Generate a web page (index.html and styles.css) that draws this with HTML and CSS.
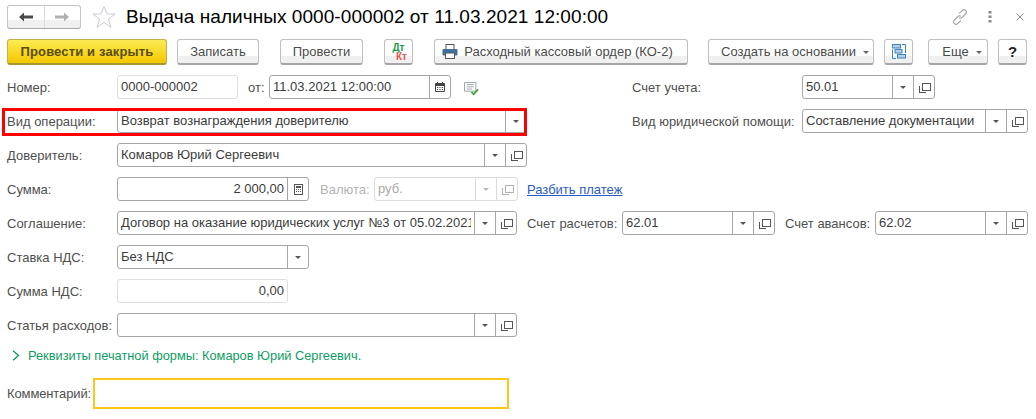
FILE: index.html
```html
<!DOCTYPE html>
<html lang="ru">
<head>
<meta charset="utf-8">
<title>Выдача наличных</title>
<link rel="stylesheet" href="styles.css">
</head>
<body>
<div class="page">
  <header class="head">
    <div class="nav">
      <div class="nav-btn nav-back"><svg width="14" height="10" viewBox="0 0 14 10"><path d="M0 5 5 0.500V3.500H14V6.500H5V9.500Z" fill="#4a4a4a"/></svg></div>
      <div class="nav-btn"><svg width="14" height="10" viewBox="0 0 14 10"><path d="M14 5 9 0.500V3.500H0V6.500H9V9.500Z" fill="#b0b0b0"/></svg></div>
    </div>
    <svg class="star" width="24" height="24" viewBox="0 0 24 24"><path d="M12 1.500 15 9H23L16.500 14 19 22.500 12 17.500 5 22.500 7.500 14 1 9H9Z" fill="#fff" stroke="#c9c9d6"/></svg>
    <h1 class="title">Выдача наличных 0000-000002 от 11.03.2021 12:00:00</h1>
    <div class="win-icons">
      <svg class="win-link" width="16" height="16" viewBox="0 0 18 18"><g fill="none" stroke="#a0a0a0" stroke-width="1.200"><path d="M8 5 11.500 1.800a2.600 2.600 0 0 1 4 3.400L11.500 9.500a2.600 2.600 0 0 1-3.600.2"/><path d="M10 13 6.500 16.200a2.600 2.600 0 0 1-4-3.400L6.500 8.500a2.600 2.600 0 0 1 3.600-.2"/></g></svg>
      <svg class="win-dots" width="4" height="12" viewBox="0 0 4 12"><g fill="#8a8a8a"><rect x="0.500" y="0" width="3" height="2.500"/><rect x="0.500" y="4.500" width="3" height="2.500"/><rect x="0.500" y="9" width="3" height="2.500"/></g></svg>
      <svg class="win-close" width="8" height="8" viewBox="0 0 8 8"><path d="M.5.500 7.500 7.500M7.500.500.5 7.500" stroke="#8a8a8a" fill="none"/></svg>
    </div>
  </header>

  <div class="toolbar">
    <button class="btn btn-primary w-post-close">Провести и закрыть</button>
    <button class="btn w-save">Записать</button>
    <button class="btn w-post">Провести</button>
    <button class="btn w-dtkt"><span class="dtkt"><span class="dt">Дт</span><span class="kt">Кт</span></span></button>
    <button class="btn w-order">
      <svg class="printer" width="16" height="15" viewBox="0 0 16 15"><rect x="4" y="0.500" width="8" height="5" fill="#fff" stroke="#555"/><rect x="0.500" y="5" width="15" height="6.500" rx="1" fill="#3f6f9e"/><rect x="3.500" y="9" width="9" height="5.500" fill="#fff" stroke="#555"/></svg>Расходный кассовый ордер (КО-2)</button>
    <button class="btn w-create">Создать на основании<i class="caret"></i></button>
    <button class="btn w-struct"><svg width="14" height="15" viewBox="0 0 14 15"><g fill="#b4d0e8" stroke="#3f86bd"><rect x="0.500" y="0.500" width="8" height="3.500"/><rect x="3" y="5.500" width="7" height="3.500"/><rect x="5.500" y="10.500" width="8" height="3.500"/></g><path d="M.5 5.500V14.500H4M13.500 9V.5H10" stroke="#3f86bd" fill="none"/></svg></button>
    <button class="btn w-more">Еще<i class="caret"></i></button>
    <button class="btn w-help">?</button>
  </div>

  <form class="form">
    <div class="row">
      <div class="row-left">
        <label class="lbl w-110">Номер:</label>
        <div class="field field-soft w-121"><span class="val">0000-000002</span></div>
        <label class="lbl lbl-date">от:</label>
        <div class="field w-182"><span class="val">11.03.2021 12:00:00</span>
          <span class="fbtn"><svg width="10" height="10" viewBox="0 0 10 10"><path d="M.5 1.500H9.500V9.500H.5Z" fill="#fff" stroke="#444"/><rect x="0.500" y="1.500" width="9" height="2.500" fill="#444"/><path d="M2.500 0V2M7.500 0V2" stroke="#444"/><path d="M2 5.500H3.200M4.400 5.500H5.600M6.800 5.500H8M2 7.500H3.200M4.400 7.500H5.600M6.800 7.500H8" stroke="#444"/></svg></span>
        </div>
        <svg class="msg" width="15" height="14" viewBox="0 0 17 16"><path d="M.5.500H13.500V10.500H.5Z" fill="#fff" stroke="#8e9aa0"/><path d="M3 3H11M3 5.500H11M3 8H9" stroke="#8e9aa0"/><path d="M8.500 11.500 11 14 16 8.500" fill="none" stroke="#3aa53a" stroke-width="2"/></svg>
      </div>
      <label class="lbl w-170">Счет учета:</label>
      <div class="field w-133"><span class="val">50.01</span><span class="fbtn"><i class="dd"></i></span><span class="fbtn"><i class="op"></i></span></div>
    </div>

    <div class="row">
      <div class="row-left">
        <div class="highlight"></div>
        <label class="lbl w-110">Вид операции:</label>
        <div class="field w-410"><span class="val">Возврат вознаграждения доверителю</span><span class="fbtn"><i class="dd"></i></span></div>
      </div>
      <label class="lbl w-170">Вид юридической помощи:</label>
      <div class="field w-226"><span class="val">Составление документации</span><span class="fbtn"><i class="dd"></i></span><span class="fbtn"><i class="op"></i></span></div>
    </div>

    <div class="row">
      <label class="lbl w-110">Доверитель:</label>
      <div class="field w-410"><span class="val">Комаров Юрий Сергеевич</span><span class="fbtn"><i class="dd"></i></span><span class="fbtn"><i class="op"></i></span></div>
    </div>

    <div class="row">
      <label class="lbl w-110">Сумма:</label>
      <div class="field w-192"><span class="val val-num">2 000,00</span>
        <span class="fbtn"><svg width="9" height="11" viewBox="0 0 9 11"><rect x="0.500" y="0.500" width="8" height="10" fill="#fff" stroke="#555"/><rect x="2" y="2" width="5" height="2" fill="#555"/><path d="M2 5.500H3M4 5.500H5M6 5.500H7M2 7.500H3M4 7.500H5M6 7.500H7" stroke="#555"/></svg></span>
      </div>
      <label class="lbl lbl-off lbl-cur">Валюта:</label>
      <div class="field field-off w-144"><span class="val">руб.</span><span class="fbtn"><i class="dd"></i></span><span class="fbtn"><i class="op"></i></span></div>
      <a class="link" href="#">Разбить платеж</a>
    </div>

    <div class="row">
      <label class="lbl w-110">Соглашение:</label>
      <div class="field w-400"><span class="val">Договор на оказание юридических услуг №3 от 05.02.2021</span><span class="fbtn"><i class="dd"></i></span><span class="fbtn"><i class="op"></i></span></div>
      <label class="lbl lbl-acc1">Счет расчетов:</label>
      <div class="field w-153"><span class="val">62.01</span><span class="fbtn"><i class="dd"></i></span><span class="fbtn"><i class="op"></i></span></div>
      <label class="lbl lbl-acc2">Счет авансов:</label>
      <div class="field w-153"><span class="val">62.02</span><span class="fbtn"><i class="dd"></i></span><span class="fbtn"><i class="op"></i></span></div>
    </div>

    <div class="row">
      <label class="lbl w-110">Ставка НДС:</label>
      <div class="field w-192"><span class="val">Без НДС</span><span class="fbtn"><i class="dd"></i></span></div>
    </div>

    <div class="row">
      <label class="lbl w-110">Сумма НДС:</label>
      <div class="field field-soft w-171"><span class="val val-num">0,00</span></div>
    </div>

    <div class="row">
      <label class="lbl w-110">Статья расходов:</label>
      <div class="field w-400"><span class="val"></span><span class="fbtn"><i class="dd"></i></span><span class="fbtn"><i class="op"></i></span></div>
    </div>

    <div class="group">
      <svg class="chev" width="8" height="11" viewBox="0 0 8 11"><path d="M1 .8 6.500 5.500 1 10.200" fill="none" stroke="#0e9d63" stroke-width="1.400"/></svg>
      <span>Реквизиты печатной формы: Комаров Юрий Сергеевич.</span>
    </div>

    <div class="comment">
      <label class="lbl lbl-comment w-86">Комментарий:</label>
      <div class="comment-box"></div>
    </div>
  </form>
</div>
</body>
</html>
```

FILE: styles.css
```css
* { box-sizing: border-box; }
html, body { margin: 0; padding: 0; background: #fff; }
body { font-family: "Liberation Sans", Arial, sans-serif; font-size: 13px; color: #4a4a4a; overflow: hidden; }
.page { width: 1036px; height: 419px; padding: 5px 8px 0 7px; }

.head { display: flex; align-items: center; height: 24px; }
.nav { display: flex; width: 74px; height: 24px; border: 1px solid #c4c4c4; border-bottom-color: #a8a8a8; border-radius: 3px; background: linear-gradient(#fff 0, #fff 65%, #f0f0f0 65%, #f0f0f0 100%); }
.nav-btn { flex: 1; display: flex; align-items: center; justify-content: center; }
.nav-back { border-right: 1px solid #dcdcdc; }
.star { margin-left: 11px; flex: none; }
.title { margin: 0 0 0 10px; font-size: 19px; letter-spacing: .06px; font-weight: 400; color: #000; white-space: nowrap; }
.win-icons { margin-left: auto; display: flex; align-items: center; }
.win-link { margin-right: 20px; }
.win-dots { margin-right: 24px; }
.win-close { margin-right: 4px; }

.toolbar { display: flex; margin-top: 10px; height: 26px; }
.btn { height: 26px; padding: 0; border: 1px solid #c0c0c0; border-bottom: 2px solid #a6a6a6; border-radius: 3px; background: linear-gradient(#fff 0, #fff 68%, #f0f0f0 68%, #f0f0f0 100%); font: 13px "Liberation Sans", Arial, sans-serif; color: #4a4a4a; display: flex; align-items: center; justify-content: center; white-space: nowrap; }
.btn-primary { background: linear-gradient(#fdeb54, #f2c800); border-color: #c4b04a; border-bottom-color: #a8982f; font-weight: 700; color: #5a4d10; letter-spacing: .15px; }
.w-post-close { width: 160px; }
.w-save { width: 82px; margin-left: 10px; }
.w-post { width: 83px; margin-left: 21px; }
.w-dtkt { width: 29px; margin-left: 21px; }
.w-order { width: 254px; margin-left: 21px; padding-right: 7px; }
.w-create { width: 166px; margin-left: 20px; padding-left: 8px; }
.w-struct { width: 29px; margin-left: 10px; }
.w-more { width: 60px; margin-left: 15px; padding-left: 8px; }
.w-help { width: 29px; margin-left: 10px; font-size: 15px; font-weight: 700; color: #222; }
.printer { margin-right: 6px; }
.caret { width: 0; height: 0; margin-left: 7px; margin-top: 2px; border: 3px solid transparent; border-top: 3px solid #666; border-bottom: 0; }
.dtkt { display: flex; flex-direction: column; width: 17px; font-size: 10px; font-weight: 700; line-height: 9px; }
.dt { color: #1a9a4a; }
.kt { color: #e0585a; align-self: flex-end; }

.form { margin-top: 10px; display: flex; flex-direction: column; gap: 10px; }
.row { display: flex; align-items: center; height: 24px; }
.row-left { position: relative; display: flex; align-items: center; width: 625px; height: 24px; }
.highlight { position: absolute; left: -5px; top: -1px; width: 525px; height: 28px; border: 3px solid #f00; z-index: 2; pointer-events: none; }
.lbl { flex: none; color: #4f4f4f; white-space: nowrap; }
.lbl-off { color: #b4b4b4; }
.lbl-comment { letter-spacing: -.12px; }
.w-110 { width: 110px; }
.w-170 { width: 170px; }
.w-86 { width: 86px; }
.lbl-date { width: 31px; padding-left: 10px; }
.lbl-cur { width: 65px; padding-left: 11px; }
.lbl-acc1 { width: 105px; padding-left: 10px; }
.lbl-acc2 { width: 100px; padding-left: 10px; }

.field { flex: none; display: flex; align-items: stretch; height: 24px; border: 1px solid #a6a6a6; border-radius: 3px; background: #fff; overflow: hidden; }
.field-soft { border-color: #dedede; }
.field-off { border-color: #dcdcdc; }
.field-off .val { color: #a8a8a8; }
.field-off .fbtn { border-left-color: #dcdcdc; }
.field-off .dd { border-top-color: #b8b8b8; }
.field-off .op { opacity: .45; }
.w-121 { width: 121px; }
.w-182 { width: 182px; }
.w-133 { width: 133px; }
.w-410 { width: 410px; }
.w-226 { width: 226px; }
.w-192 { width: 192px; }
.w-144 { width: 144px; }
.w-400 { width: 400px; }
.w-153 { width: 153px; }
.w-171 { width: 171px; }
.val { flex: 1; min-width: 0; padding-left: 3px; margin-right: 3px; line-height: 22px; color: #3c3c3c; white-space: nowrap; overflow: hidden; }
.val-num { text-align: right; }
.fbtn { flex: none; width: 21px; display: flex; align-items: center; justify-content: center; border-left: 1px solid #a6a6a6; }
.dd { width: 0; height: 0; border: 3px solid transparent; border-top: 3px solid #555; border-bottom: 0; }
.op { position: relative; width: 10px; height: 9px; display: block; }
.op::before { content: ""; position: absolute; left: 3px; top: 0; width: 7px; height: 6px; border: 1px solid #555; }
.op::after { content: ""; position: absolute; left: 0; top: 3px; width: 6px; height: 6px; border-left: 1px solid #555; border-bottom: 1px solid #555; }

.msg { margin-left: 13px; margin-top: 3px; }
.link { margin-left: 9px; color: #2a5bc4; }

.group { display: flex; align-items: center; height: 20px; margin-top: -2px; font-size: 12.8px; color: #0e9d63; }
.chev { margin-left: 5px; margin-right: 8px; }
.comment { display: flex; align-items: center; margin-top: 3px; }
.comment-box { width: 416px; height: 31px; border: 2px solid #fdc71a; background: #fff; }
```
